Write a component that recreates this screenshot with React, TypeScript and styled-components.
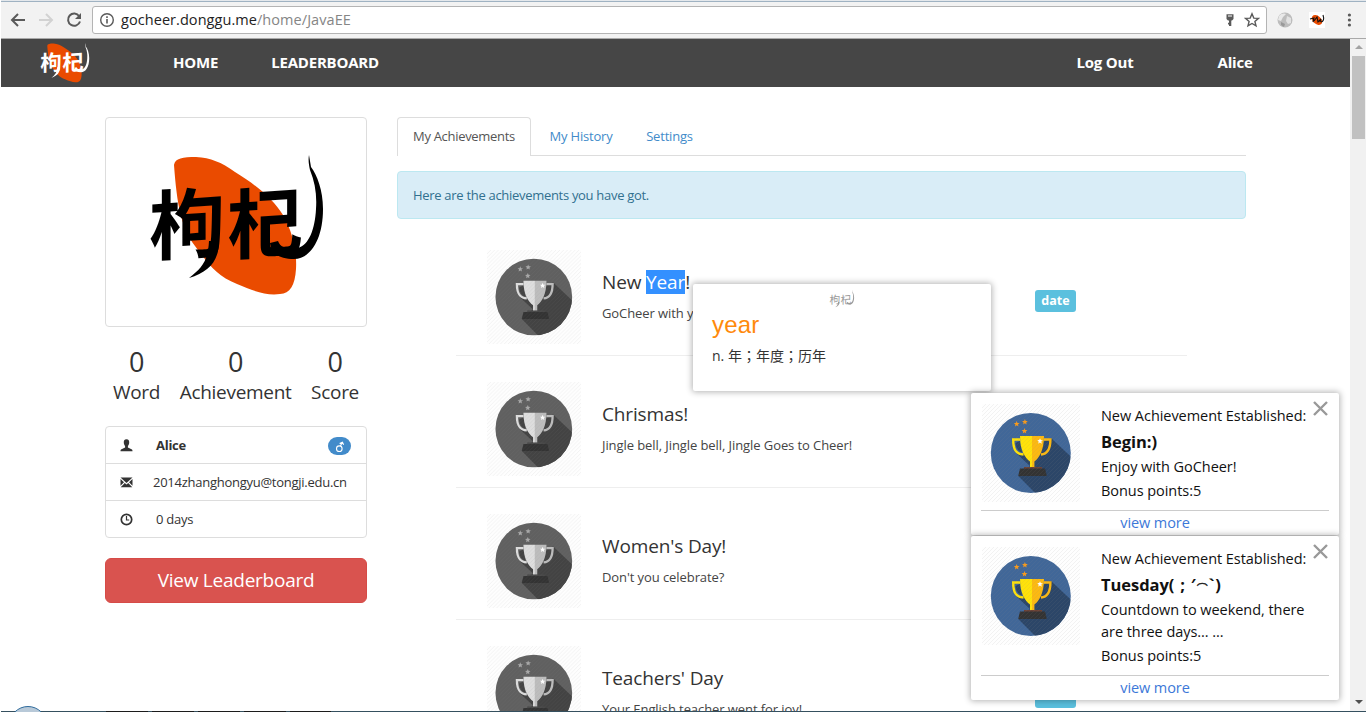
import React from "react";
import styled, { createGlobalStyle, css } from "styled-components";

const GlobalStyle = createGlobalStyle`
  * { box-sizing: border-box; }
  html, body { margin: 0; padding: 0; background: #fff; overflow: hidden; }
  body { font-family: "Open Sans", "Noto Sans", "Noto Sans CJK SC", sans-serif; color: #333; }
`;

const Screen = styled.div`
  position: relative;
  width: 1366px;
  height: 713px;
  overflow: hidden;
  display: flex;
  flex-direction: column;
  background: #fff;
`;

/* browser chrome */
const Toolbar = styled.header`
  height: 39px;
  flex: none;
  margin-left: 1px;
  display: flex;
  align-items: center;
  background: #f2f2f2;
  border-top: 1px solid #e4e8ec;
  border-bottom: 1px solid #a9a9a9;
  box-shadow: inset 0 1px 0 #9fb2c2;
`;
const NavButtons = styled.div`
  display: flex;
  width: 91px;
  padding-left: 8px;
  gap: 10px;
  svg { display: block; }
`;
const AddressBar = styled.div`
  width: 1175px;
  height: 28px;
  margin-top: 1px;
  display: flex;
  align-items: center;
  padding: 0 6px 0 6px;
  background: #fff;
  border: 1px solid #b4b4b4;
  border-radius: 3px;
`;
const Url = styled.div`
  margin-left: 6px;
  flex: 1;
  font-size: 14.5px;
  line-height: 20px;
  letter-spacing: 0.06px;
  color: #222;
  span { color: #858585; }
`;
const BarIcons = styled.div`
  display: flex;
  align-items: center;
  gap: 7px;
`;
const Extensions = styled.div`
  display: flex;
  align-items: center;
  margin-left: 10px;
  gap: 16px;
  svg { display: block; }
`;

/* page */
const Viewport = styled.div`
  display: flex;
  height: 672px;
  flex: none;
`;
const Page = styled.div`
  width: 1350px;
  height: 672px;
  overflow: hidden;
  padding-left: 1px;
`;
const ScrollTrack = styled.div`
  width: 16px;
  background: #f1f1f1;
  display: flex;
  flex-direction: column;
  align-items: center;
  padding: 6px 1px 7px 2px;
`;
const ScrollThumb = styled.div`
  width: 13px;
  height: 83px;
  margin-top: 6px;
  background: #c1c1c1;
`;
const ScrollArrow = styled.i<{ $down?: boolean }>`
  width: 0;
  height: 0;
  border-left: 4px solid transparent;
  border-right: 4px solid transparent;
  ${(p) =>
    p.$down
      ? css`border-top: 4px solid #505050; margin-top: auto;`
      : css`border-bottom: 4px solid #a3a3a3; margin-bottom: 1px;`}
`;
const Navbar = styled.nav`
  height: 48px;
  display: flex;
  align-items: center;
  background: #464646;
  padding-left: 39px;
`;
const NavLink = styled.a<{ $left: number; $spacing?: number }>`
  margin-left: ${(p) => p.$left}px;
  padding-bottom: 2px;
  white-space: nowrap;
  font-size: 15px;
  line-height: 20px;
  font-weight: 700;
  letter-spacing: ${(p) => p.$spacing ?? -0.2}px;
  color: #fff;
`;
const NavRight = styled.div`
  display: flex;
  margin-left: auto;
  width: 273.5px;
`;
const Content = styled.div`
  display: flex;
  gap: 30px;
  padding: 30px 0 0 104px;
`;
const Sidebar = styled.aside`
  width: 262px;
  flex: none;
`;
const Avatar = styled.div`
  height: 210px;
  border: 1px solid #ddd;
  border-radius: 4px;
  svg { display: block; }
`;
const Stats = styled.div`
  display: flex;
  justify-content: space-between;
  padding: 17px 8px 0 8px;
  height: 99px;
`;
const Stat = styled.div`
  text-align: center;
  font-size: 19px;
  line-height: 24px;
  letter-spacing: -0.3px;
  strong {
    display: block;
    font-weight: 400;
    font-size: 27px;
    line-height: 36px;
  }
`;
const InfoList = styled.ul`
  list-style: none;
  margin: 0;
  padding: 0;
  border: 1px solid #ddd;
  border-radius: 4px;
`;
const InfoRow = styled.li<{ $gap?: number; $bold?: boolean }>`
  display: flex;
  align-items: center;
  height: 37px;
  padding: 0 15px 0 14px;
  font-size: 13px;
  letter-spacing: -0.26px;
  font-weight: ${(p) => (p.$bold ? 700 : 400)};
  &:first-child { height: 36px; }
  & + & { border-top: 1px solid #ddd; }
  & > svg { flex: none; margin-right: ${(p) => p.$gap ?? 23}px; }
`;
const GenderBadge = styled.span`
  margin: 2px 0 0 auto;
  width: 23px;
  height: 18px;
  border-radius: 9px;
  background: #428bca;
  display: flex;
  justify-content: center;
  align-items: center;
`;
const LeaderButton = styled.button`
  display: block;
  width: 262px;
  height: 45px;
  margin-top: 20px;
  padding: 0 0 1px;
  border: 1px solid #d64b47;
  border-radius: 6px;
  background: #d9534f;
  color: #fff;
  font: 400 19px "Open Sans", sans-serif;
  letter-spacing: -0.25px;
`;
const Main = styled.main`
  width: 849px;
`;
const Tabs = styled.div`
  display: flex;
  height: 39px;
  border-bottom: 1px solid #ddd;
`;
const Tab = styled.a<{ $active?: boolean; $width: number }>`
  width: ${(p) => p.$width}px;
  height: 39px;
  text-align: center;
  white-space: nowrap;
  font-size: 13px;
  line-height: 37px;
  letter-spacing: ${(p) => (p.$active ? -0.3 : -0.2)}px;
  color: ${(p) => (p.$active ? "#555" : "#428bca")};
  border: 1px solid ${(p) => (p.$active ? "#ddd" : "transparent")};
  border-bottom: 0;
  border-radius: 4px 4px 0 0;
  background: ${(p) => (p.$active ? "#fff" : "transparent")};
`;
const Alert = styled.div`
  height: 48px;
  margin-top: 15px;
  padding-left: 15px;
  font-size: 13px;
  line-height: 47px;
  letter-spacing: -0.3px;
  color: #31708f;
  background: #d9edf7;
  border: 1px solid #bce8f1;
  border-radius: 4px;
`;
const Achievements = styled.div`
  margin: 5px 0 0 59px;
  width: 731px;
`;
const AchievementRow = styled.article`
  height: 132px;
  display: flex;
  padding: 26px 0 0 31px;
  border-bottom: 1px solid #eee;
`;
const AchievementText = styled.div`
  margin-left: 21px;
  padding-top: 19px;
  width: 433px;
  h4 {
    margin: 0;
    font-weight: 400;
    font-size: 19px;
    line-height: 26px;
    letter-spacing: -0.14px;
  }
  p {
    margin: 8px 0 0;
    font-size: 13px;
    line-height: 20px;
    letter-spacing: -0.08px;
    color: #444;
  }
`;
const Selected = styled.mark`
  display: inline-block;
  height: 24px;
  line-height: 24px;
  background: #3390ff;
  color: #fff;
`;
const Tag = styled.span`
  width: 41px;
  height: 22px;
  margin-top: 40px;
  border-radius: 3px;
  background: #5bc0de;
  color: #fff;
  text-align: center;
  font-size: 12.5px;
  line-height: 21px;
  font-weight: 700;
`;

/* floating panels */
const floating = css`
  position: absolute;
  background: #fff;
  border-radius: 2px;
  box-shadow: 0 0 6px 1px rgba(0, 0, 0, 0.3);
`;
const WordPopup = styled.section`
  ${floating}
  left: 693px;
  top: 284px;
  width: 298px;
  height: 107px;
  padding: 6px 20px 0 19px;
  svg { display: block; margin: 0 auto; }
  h2 {
    margin: 1px 0 0;
    font: 400 24px/28px "Liberation Sans", sans-serif;
    letter-spacing: 0.2px;
    color: #ff8a0c;
  }
  p { margin: 5px 0 0; font-size: 14px; line-height: 22px; letter-spacing: 0; }
`;
const Pause = styled.span`
  font-family: "Noto Sans CJK TC", sans-serif;
`;
const ToastStack = styled.div`
  position: absolute;
  left: 971px;
  top: 393px;
  display: flex;
  flex-direction: column;
  gap: 1px;
`;
const Toast = styled.section<{ $height: number }>`
  ${floating}
  position: relative;
  width: 368px;
  height: ${(p) => p.$height}px;
  display: flex;
  flex-direction: column;
  padding: 11px 10px 0;
  color: #111;
`;
const ToastBody = styled.div`
  display: flex;
  flex: 1;
  padding-left: 1px;
`;
const ToastText = styled.div`
  margin-left: 21px;
  padding-top: 1px;
  font-size: 14.5px;
  line-height: 22px;
  letter-spacing: -0.05px;
  white-space: nowrap;
`;
const ToastLine = styled.div`
  margin-bottom: 2px;
`;
const ToastTitle = styled.div`
  font-size: 16.5px;
  height: 27px;
  line-height: 25px;
  font-weight: 700;
`;
const Face = styled.span`
  letter-spacing: 0.8px;
`;
const Arc = styled.span`
  font-size: 11px;
  line-height: 1;
  font-weight: 400;
  vertical-align: -2px;
  -webkit-text-stroke: 0.3px #111;
`;
const CloseButton = styled.button`
  position: absolute;
  right: 11px;
  top: 8px;
  padding: 0;
  border: 0;
  background: none;
  svg { display: block; }
`;
const ToastLink = styled.a`
  height: 25px;
  flex: none;
  border-top: 1px solid #ccc;
  text-align: center;
  font-size: 14.5px;
  line-height: 23px;
  letter-spacing: -0.1px;
  color: #3c78d8;
`;

/* desktop strip under the window */
const DesktopEdge = styled.div`
  position: relative;
  height: 1px;
  margin-left: 1px;
  background: linear-gradient(
    90deg,
    #35505f 0 105px, #1c1c1c 105px 147px, #35505f 147px 151px, #1c1c1c 151px 193px, #35505f 193px 197px,
    #1c1c1c 197px 239px, #35505f 239px 243px, #1c1c1c 243px 285px, #35505f 285px 289px, #1c1c1c 289px 330px, #35505f 330px
  );
`;
const StartOrb = styled.div`
  position: absolute;
  left: 12px;
  bottom: 0;
  width: 28px;
  height: 6px;
  overflow: hidden;
  &::before {
    content: "";
    display: block;
    width: 36px;
    height: 36px;
    margin-left: -4px;
    border-radius: 50%;
    border: 1px solid #2f6b9c;
    background: #b8c9d8;
  }
`;

function Logo({ width, height, ink, berry }: { width: number; height: number; ink: string; berry?: string }) {
  return (
    <svg width={width} height={height} viewBox="0 0 176 142">
      {berry && (
        <path
          d="M25 10C26 3 34 2 47 2C62 3 72 7 86 17C106 29 124 44 134 60C144 78 148 96 147 114C146 130 141 139 131 139C118 141 104 136 88 129C68 121 60 110 46 91C32 72 28 50 25 10Z"
          fill={berry}
        />
      )}
      <g fill={ink} fontFamily='"Noto Sans CJK SC", sans-serif' fontSize="76" fontWeight={berry ? 700 : 400}>
        <text transform="translate(0 100) skewY(-4)">枸</text>
        <text transform="translate(78 99) skewY(-4)">杞</text>
      </g>
      <path d="M70 86C70 106 60 117 40 123C53 113 59 106 60 86Z" fill={ink} />
      <path
        d="M160 0C159 5 160 10 161 15C166 27 168 40 167 54C166 74 160 90 149 93C141 95 132 94 129 86L121 88C122 98 130 104 145 104C161 104 174 85 174 54C174 35 168 20 162 12Z"
        fill={ink}
      />
    </svg>
  );
}

const COLOURS = {
  earned: { disc: "#416798", shade: "#2c4668", light: "#ffe20a", dark: "#fcb912", star: "#f79a1c", base: "#333", rim: "#6b4236" },
  grey: { disc: "#606060", shade: "#434343", light: "#dedede", dark: "#bdbdbd", star: "#a8a8a8", base: "#333", rim: "#484848" },
};

const star = (cx: number, cy: number, r: number) =>
  Array.from({ length: 10 }, (_, i) => {
    const a = (Math.PI / 5) * i - Math.PI / 2;
    const q = i % 2 ? r * 0.45 : r;
    return `${(cx + q * Math.cos(a)).toFixed(2)},${(cy + q * Math.sin(a)).toFixed(2)}`;
  }).join(" ");

const TrophyArt = styled.svg`
  flex: none;
`;

function Trophy({ size, tone, id }: { size: number; tone: keyof typeof COLOURS; id: string }) {
  const c = COLOURS[tone];
  return (
    <TrophyArt width={size} height={size} viewBox="0 0 98 98">
      <defs>
        <clipPath id={`disc-${id}`}><circle cx="48.8" cy="49" r="40" /></clipPath>
        <pattern id={`hatch-${id}`} width="4" height="4" patternUnits="userSpaceOnUse">
          <path d="M-1 1L1 -1M0 4L4 0M3 5L5 3" stroke="#8a8a8a" strokeOpacity="0.1" strokeWidth="1" />
        </pattern>
      </defs>
      <rect width="98" height="98" fill="#fefefe" />
      <circle cx="48.8" cy="49" r="40" fill={c.disc} />
      <path clipPath={`url(#disc-${id})`} d="M69 34L100 63V100H64L36.3 72L48 62L34 49Z" fill={c.shade} />
      <path d="M38 35.5H31.2C31.2 44 33 50 41.5 50.5" fill={c.disc} stroke={c.light} strokeWidth="2.4" />
      <path d="M62 35.5H68.4C68.4 44 66.5 50 59 50.5" fill="none" stroke={c.dark} strokeWidth="2.4" />
      <path d="M33.5 39C34 44 36 47.5 40 48.5L38 37Z" fill={c.shade} />
      <path d="M38 32H50V64H48V57.5C43 54 38 46 38 32Z" fill={c.light} />
      <path d="M50 32H62C62 46 57.3 54 52.4 57.5V64H50Z" fill={c.dark} />
      <path d="M42 63H60V65H42Z" fill={c.rim} />
      <path d="M38 64.6H63L64.8 72H36.2Z" fill={c.base} />
      <polygon points={star(58, 37.2, 3)} fill="#fff" />
      <polygon points={star(34.7, 20, 3)} fill={c.star} />
      <polygon points={star(42.9, 18, 3)} fill={c.star} />
      <polygon points={star(42.5, 27, 3)} fill={c.star} />
      <rect width="98" height="98" fill={`url(#hatch-${id})`} />
    </TrophyArt>
  );
}

const rows = [
  { title: <>New <Selected>Year</Selected>!</>, text: "GoCheer with you!", tag: "date" },
  { title: "Chrismas!", text: "Jingle bell, Jingle bell, Jingle Goes to Cheer!", tag: "date" },
  { title: "Women's Day!", text: "Don't you celebrate?", tag: "date" },
  { title: "Teachers' Day", text: "Your English teacher went for joy!", tag: "" },
];

const toasts = [
  { height: 142, title: "Begin:)", lines: ["Enjoy with GoCheer!"] },
  { height: 164, title: <>Tuesday<Face>( ; ′<Arc>⌒</Arc>`)</Face></>, lines: ["Countdown to weekend, there", "are three days... ..."] },
];

export default function App() {
  return (
    <Screen>
      <GlobalStyle />
      <Toolbar>
        <NavButtons>
          <svg width="18" height="18" viewBox="0 0 18 18" fill="none" stroke="#5a5a5a" strokeWidth="2"><path d="M16 9H3M9 3L3 9L9 15" /></svg>
          <svg width="18" height="18" viewBox="0 0 18 18" fill="none" stroke="#d2d2d2" strokeWidth="2"><path d="M2 9H15M9 3L15 9L9 15" /></svg>
          <svg width="18" height="18" viewBox="0 0 18 18" fill="none" stroke="#5a5a5a" strokeWidth="2"><path d="M14.2 5.2A6.1 6.1 0 1 0 15 10.5" /><path d="M16 2V8H10Z" fill="#5a5a5a" stroke="none" /></svg>
        </NavButtons>
        <AddressBar>
          <svg width="16" height="16" viewBox="0 0 16 16" fill="none" stroke="#5a5a5a" strokeWidth="1.4"><circle cx="8" cy="8" r="6.3" /><path d="M8 7V11.5M8 4.3V5.9" strokeWidth="1.6" /></svg>
          <Url>gocheer.donggu.me<span>/home/JavaEE</span></Url>
          <BarIcons>
            <svg width="14" height="16" viewBox="0 0 14 16"><path d="M3.5 2.2H10.5V7L9 8.5H8.3V14H6V12.5H5V10.8H6V8.5H5L3.5 7Z" fill="#5a5a5a" /><path d="M5 4H9" stroke="#fff" /></svg>
            <svg width="16" height="16" viewBox="0 0 16 16" fill="none" stroke="#5a5a5a" strokeWidth="1.4"><path d="M8 1.8L9.8 6.1L14.4 6.4L10.9 9.4L12 13.9L8 11.5L4 13.9L5.1 9.4L1.6 6.4L6.2 6.1Z" /></svg>
          </BarIcons>
        </AddressBar>
        <Extensions>
          <svg width="16" height="16" viewBox="0 0 16 16"><circle cx="8" cy="8" r="7.5" fill="#bdbdbd" /><path d="M2 4C4 1 8 1 9 2L6 5L4 9L1 8Z" fill="#e9e9e9" /><path d="M10 4L14 6L14 11L11 12L9 9Z" fill="#e2e2e2" /><path d="M4 10L8 12L7 15L4 13Z" fill="#999" /></svg>
          <svg width="16" height="16" viewBox="0 0 16 16"><rect width="16" height="16" fill="#fff" /><ellipse cx="8" cy="8" rx="6" ry="4" fill="#ea4b00" transform="rotate(40 8 8)" /><path d="M1 7L5 6L4 10M5 9L8 5L9 10L12 7L11 10M14 3Q16 9 12 10" stroke="#111" strokeWidth="1.1" fill="none" /></svg>
          <svg width="16" height="16" viewBox="0 0 16 16" fill="#5a5a5a"><circle cx="8.4" cy="3" r="1.6" /><circle cx="8.4" cy="8" r="1.6" /><circle cx="8.4" cy="13" r="1.6" /></svg>
        </Extensions>
      </Toolbar>

      <Viewport>
        <Page>
          <Navbar>
            <Logo width={50} height={40} ink="#fff" berry="#ea4b00" />
            <NavLink $left={83}>HOME</NavLink>
            <NavLink $left={53}>LEADERBOARD</NavLink>
            <NavRight>
              <NavLink $left={0}>Log Out</NavLink>
              <NavLink $left={84}>Alice</NavLink>
            </NavRight>
          </Navbar>
          <Content>
            <Sidebar>
              <Avatar>
                <svg width="260" height="208" viewBox="0 0 260 208">
                  <g transform="translate(43 37)"><Logo width={176} height={142} ink="#000" berry="#ea4b00" /></g>
                </svg>
              </Avatar>
              <Stats>
                <Stat><strong>0</strong>Word</Stat>
                <Stat><strong>0</strong>Achievement</Stat>
                <Stat><strong>0</strong>Score</Stat>
              </Stats>
              <InfoList>
                <InfoRow $bold>
                  <svg width="13" height="13" viewBox="0 0 13 13"><path d="M6.5 0.3C8.7 0.3 9.4 1.9 9.2 3.8C9.1 5.5 8.3 6.6 7.9 7.2V8.5L11.5 10.2C12.3 10.6 12.5 11 12.5 12.3H0.5C0.5 11 0.7 10.6 1.5 10.2L5.1 8.5V7.2C4.7 6.6 3.9 5.5 3.8 3.8C3.6 1.9 4.3 0.3 6.5 0.3Z" fill="#333" /></svg>
                  <span>Alice</span>
                  <GenderBadge>
                    <svg width="12" height="14" viewBox="0 0 12 14" fill="none" stroke="#fff" strokeWidth="1.1"><circle cx="5.3" cy="9.7" r="2.8" /><path d="M6.4 7L8.2 3.6M5.6 4.4L8.4 3.2L9.6 5.8" /></svg>
                  </GenderBadge>
                </InfoRow>
                <InfoRow $gap={20}>
                  <svg width="13" height="11" viewBox="0 0 13 11"><path d="M0.5 0.5H12.5L6.5 6Z" fill="#333" /><path d="M0.5 2L4 5.2L0.5 8.8ZM12.5 2L9 5.2L12.5 8.8ZM0.7 10.3L4.8 6L6.5 7.5L8.2 6L12.3 10.3Z" fill="#333" /></svg>
                  <span>2014zhanghongyu@tongji.edu.cn</span>
                </InfoRow>
                <InfoRow>
                  <svg width="13" height="13" viewBox="0 0 13 13" fill="none" stroke="#333"><circle cx="6.5" cy="6.5" r="5.2" strokeWidth="1.7" /><path d="M6.5 3V7H9.2" strokeWidth="1.2" /></svg>
                  <span>0 days</span>
                </InfoRow>
              </InfoList>
              <LeaderButton>View Leaderboard</LeaderButton>
            </Sidebar>
            <Main>
              <Tabs>
                <Tab $active $width={134}>My Achievements</Tab>
                <Tab $width={100}>My History</Tab>
                <Tab $width={77}>Settings</Tab>
              </Tabs>
              <Alert>Here are the achievements you have got.</Alert>
              <Achievements>
                {rows.map((row, i) => (
                  <AchievementRow key={i}>
                    <Trophy size={94} tone="grey" id={`row${i}`} />
                    <AchievementText>
                      <h4>{row.title}</h4>
                      <p>{row.text}</p>
                    </AchievementText>
                    <Tag>{row.tag}</Tag>
                  </AchievementRow>
                ))}
              </Achievements>
            </Main>
          </Content>
        </Page>
        <ScrollTrack>
          <ScrollArrow />
          <ScrollThumb />
          <ScrollArrow $down />
        </ScrollTrack>
      </Viewport>
      <DesktopEdge><StartOrb /></DesktopEdge>

      <WordPopup>
        <Logo width={28} height={20} ink="#999" />
        <h2>year</h2>
        <p>n. 年<Pause lang="zh-TW">；</Pause>年度<Pause lang="zh-TW">；</Pause>历年</p>
      </WordPopup>
      <ToastStack>
        {toasts.map((t, i) => (
          <Toast key={i} $height={t.height}>
            <ToastBody>
              <Trophy size={98} tone="earned" id={`toast${i}`} />
              <ToastText>
                <ToastLine>New Achievement Established:</ToastLine>
                <ToastTitle>{t.title}</ToastTitle>
                <ToastLine>{t.lines.map((l, n) => <React.Fragment key={l}>{n > 0 && <br />}{l}</React.Fragment>)}</ToastLine>
                <ToastLine>Bonus points:5</ToastLine>
              </ToastText>
            </ToastBody>
            <CloseButton aria-label="Close">
              <svg width="15" height="15" viewBox="0 0 15 15" stroke="#999" strokeWidth="2.4"><path d="M1 1L14 14M14 1L1 14" /></svg>
            </CloseButton>
            <ToastLink>view more</ToastLink>
          </Toast>
        ))}
      </ToastStack>
    </Screen>
  );
}
